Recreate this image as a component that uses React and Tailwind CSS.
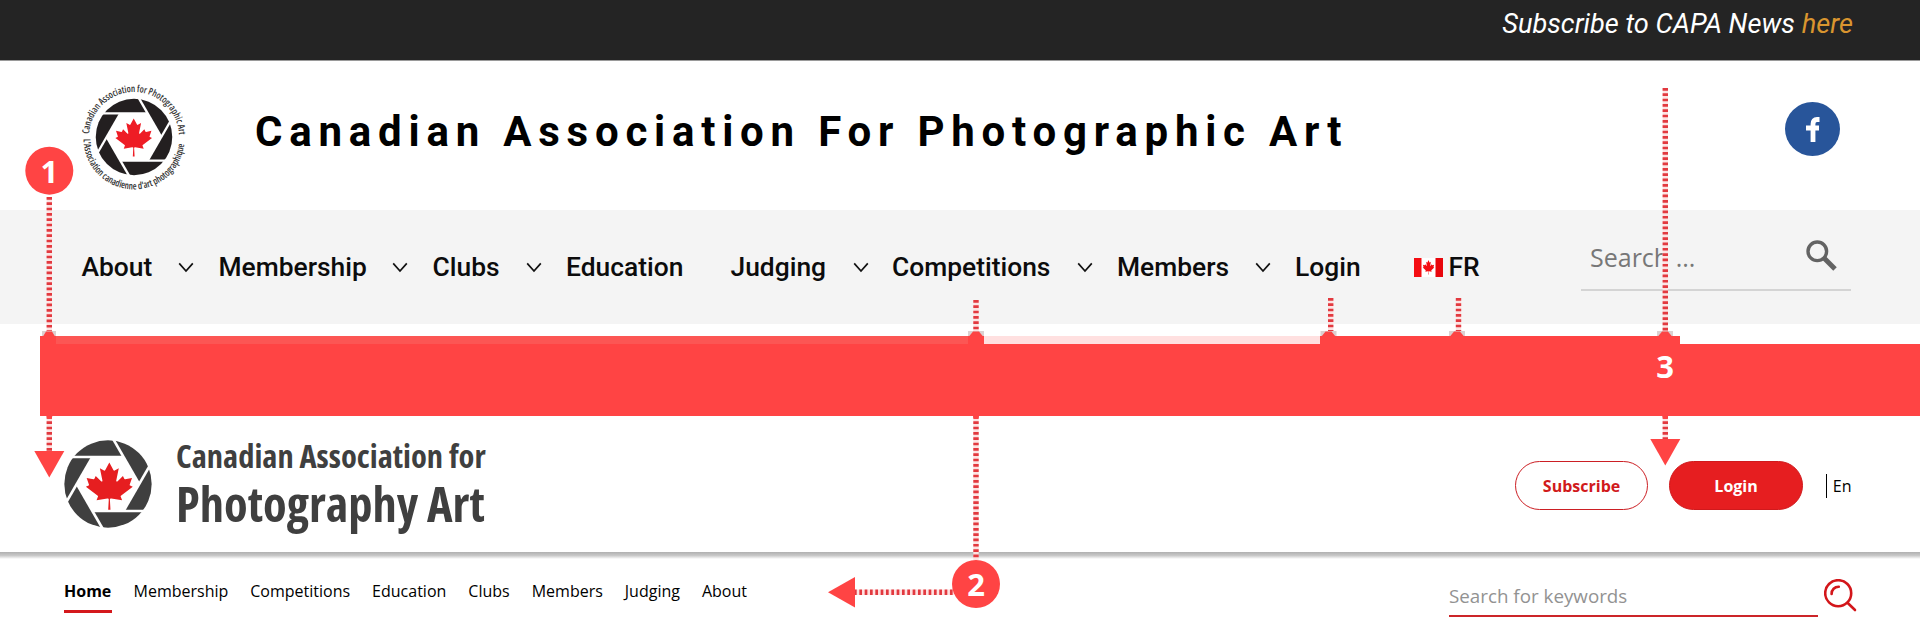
const LEAF =
  'm-90 2030 45-863a95 95 0 0 0-111-98l-859 151 116-320a65 65 0 0 0-20-73l-941-762 212-99a65 65 0 0 0 34-79l-186-572 542 115a65 65 0 0 0 73-38l105-247 423 454a65 65 0 0 0 111-57l-204-1052 327 189a65 65 0 0 0 91-27l332-652 332 652a65 65 0 0 0 91 27l327-189-204 1052a65 65 0 0 0 111 57l423-454 105 247a65 65 0 0 0 73 38l542-115-186 572a65 65 0 0 0 34 79l212 99-941 762a65 65 0 0 0-20 73l116 320-859-151a95 95 0 0 0-111 98l45 863z';

const BLADES = [0, 60, 120, 180, 240, 300];

/* Camera shutter, drawn on a disc of radius 131 round the origin */
function Shutter({ color, leaf, leafTransform }) {
  return (
    <>
      <circle r="131" fill={color} />
      <polygon points="47,-81 94,0 47,81 -47,81 -94,0 -47,-81" fill="#fff" />
      {BLADES.map((a) => (
        <path key={a} d="M47 -81H-120" transform={`rotate(${a})`} stroke="#fff" strokeWidth="8" />
      ))}
      <path d={LEAF} transform={leafTransform} fill={leaf} />
    </>
  );
}

function OldLogo() {
  return (
    <svg className="block h-[114px] w-[114px]" viewBox="-57 -57 114 114">
      <defs>
        <path id="arc-top" d="M-44.9 -3A45 45 0 0 1 44.9 -3" />
        <path id="arc-bottom" d="M-50.4 2A50.4 50.4 0 0 0 50.4 2" />
      </defs>
      <g transform="scale(0.292)">
        <Shutter color="#231f20" leaf="#ee1c25" leafTransform="translate(-1 1) scale(.0337 .0322)" />
      </g>
      <g className='fill-[#333] font-["Open_Sans",sans-serif] text-[9.8px] font-semibold [font-stretch:75%]'>
        <text textLength="136" lengthAdjust="spacingAndGlyphs">
          <textPath href="#arc-top" textLength="136" lengthAdjust="spacingAndGlyphs">
            Canadian Association for Photographic Art
          </textPath>
        </text>
        <text textLength="153" lengthAdjust="spacingAndGlyphs">
          <textPath href="#arc-bottom" textLength="153" lengthAdjust="spacingAndGlyphs">
            L'Association canadienne d'art photographique
          </textPath>
        </text>
      </g>
    </svg>
  );
}

function NewLogo() {
  return (
    <svg className="block h-[88px] w-[88px]" viewBox="-132 -132 264 264">
      <Shutter color="#3f3f3f" leaf="#e61e20" leafTransform="translate(4 6) scale(.0378 .0352)" />
    </svg>
  );
}

function Chevron() {
  return (
    <svg className="block h-4 w-4" viewBox="0 0 16 16" fill="none" stroke="#111" strokeWidth="1.7">
      <path d="M1.2 4.4 8 12 14.8 4.4" />
    </svg>
  );
}

function Flag() {
  return (
    <svg className="block h-[19px] w-[29px]" viewBox="0 0 29 19">
      <rect width="29" height="19" fill="#fff" />
      <rect width="7.5" height="19" fill="#f40d12" />
      <rect x="21.5" width="7.5" height="19" fill="#e8060c" />
      <path d={LEAF} transform="translate(14.5 9.3) scale(.0031 .0036)" fill="#f40d12" />
    </svg>
  );
}

const topItems = [
  { label: 'About', slot: 'w-[96px]', chevron: true, gap: 'w-[41px]' },
  { label: 'Membership', slot: 'w-[173.5px]', chevron: true, gap: 'w-[40.5px]' },
  { label: 'Clubs', slot: 'w-[93.5px]', chevron: true, gap: 'w-[40px]' },
  { label: 'Education', slot: 'w-[164.5px]' },
  { label: 'Judging', slot: 'w-[122px]', chevron: true, gap: 'w-[39.5px]' },
  { label: 'Competitions', slot: 'w-[185px]', chevron: true, gap: 'w-[40px]' },
  { label: 'Members', slot: 'w-[138px]', chevron: true, gap: 'w-[40px]' },
  { label: 'Login', slot: 'w-[118.5px]' },
];

const bottomItems = ['Membership', 'Competitions', 'Education', 'Clubs', 'Members', 'Judging', 'About'];

function Dots({ x, y1, y2 }) {
  return (
    <>
      <path d={`M${x} ${y1}V${y2}`} stroke="#fde3e3" strokeWidth="5.4" />
      <path d={`M${x} ${y1}V${y2}`} stroke="#e2393f" strokeWidth="5.4" strokeDasharray="2.7 2.63" />
    </>
  );
}

function Joint({ x, w }) {
  return (
    <>
      <rect x={x - w / 2} y="331" width={w} height="5" fill="#dcd0d0" />
      <path d={`M${x - w / 2 + 1} 336.5 L${x - 3} 331.5H${x + 3}L${x + w / 2 - 1} 336.5z`} fill="#fd4444" />
    </>
  );
}

function Annotations() {
  return (
    <svg className="pointer-events-none absolute inset-0 h-[639px] w-[1920px]" viewBox="0 0 1920 639">
      <Dots x={49.3} y1={197} y2={332} />
      <Dots x={49.3} y1={416} y2={452} />
      <Dots x={976} y1={300} y2={332} />
      <Dots x={976} y1={416} y2={560} />
      <Dots x={1330.7} y1={298} y2={332} />
      <Dots x={1458.5} y1={298} y2={332} />
      <Dots x={1665.3} y1={88} y2={332} />
      <Dots x={1665.3} y1={416} y2={439} />
      <path d="M854 592.3H954" stroke="#fde3e3" strokeWidth="5.4" />
      <path d="M854 592.3H954" stroke="#e2393f" strokeWidth="5.4" strokeDasharray="2.7 2.63" />
      <Joint x={49} w={14} />
      <Joint x={976} w={16} />
      <Joint x={1328.5} w={16} />
      <Joint x={1457} w={16} />
      <Joint x={1665} w={16} />
      <path d="M46.5 415.5h6l-1 3.5h-4zM973 415.5h6l-1 3.5h-4zM1662.3 415.5h6l-1 3.5h-4z" fill="#fd4444" />
      <path d="M34.3 451H64.3L49.3 477.5z" fill="#ff4444" />
      <path d="M1650.3 439H1680.3L1665.3 465.5z" fill="#ff4444" />
      <path d="M855 577V607.5L828 592.3z" fill="#ff4444" />
      <circle cx="49.3" cy="170.7" r="24" fill="#ff4444" />
      <circle cx="976" cy="584" r="24" fill="#ff4444" />
      <g className='fill-white font-["Open_Sans",sans-serif] text-[31px] font-bold' textAnchor="middle">
        <text x="49.3" y="182.5">1</text>
        <text x="976" y="596">2</text>
        <text x="1665" y="378">3</text>
      </g>
    </svg>
  );
}

export default function App() {
  return (
    <div className='relative h-[639px] w-[1920px] overflow-hidden bg-white font-["Open_Sans",sans-serif] text-black'>
      <div className='flex h-[61px] items-start justify-end gap-[7px] border-b border-[#9a9a9a] bg-[#242424] pr-[67px] font-["Roboto",sans-serif] text-[27.2px] leading-[48px] text-white italic'>
        <span>Subscribe to CAPA News</span>
        <span className="text-[#d9952f]">here</span>
      </div>

      <header className="flex h-[149px] items-start">
        <div className="ml-[77px] pt-[19px]">
          <OldLogo />
        </div>
        <h1 className='mt-[46px] ml-[64px] font-["Roboto",sans-serif] text-[42px] leading-[50px] font-bold tracking-[6.78px] whitespace-nowrap'>
          Canadian Association For Photographic Art
        </h1>
        <div className="mt-[41px] mr-[80px] ml-auto flex h-[54px] w-[55px] items-center justify-center rounded-[50%] bg-[#28559a]">
          <svg className="block h-[25px] w-[14px]" viewBox="0 0 14 25" fill="none" stroke="#fff" strokeWidth="4.8">
            <path d="M13.5 2.5H11Q7 2.5 7 7V25M0 11H13" />
          </svg>
        </div>
      </header>

      <nav className="flex h-[114px] items-center bg-[#f4f4f4] pl-[81.5px]">
        <div className='flex items-center font-["Roboto",sans-serif] text-[26.4px] leading-[40px] font-medium text-[#0c0c0c]'>
          {topItems.map((it) => (
            <div key={it.label} className="flex items-center">
              <span className={it.slot}>{it.label}</span>
              {it.chevron && (
                <span className={it.gap}>
                  <Chevron />
                </span>
              )}
            </div>
          ))}
          <Flag />
          <span className="ml-[6px] w-[132.5px]">FR</span>
        </div>
        <div className="mb-[18px] flex h-[65px] w-[270px] items-start justify-between border-b-2 border-[#d4d4d4] pt-[14px] pr-[13px] pl-[9px]">
          <span className="text-[25px] leading-[35px] text-[#777]">Search ...</span>
          <svg className="block h-[32px] w-[32px]" viewBox="0 0 32 32" fill="none" stroke="#636363">
            <circle cx="11.3" cy="11.3" r="9.3" strokeWidth="3.4" />
            <path d="M18 18 29 29" strokeWidth="5" />
          </svg>
        </div>
      </nav>

      <div className="flex h-[92px] items-end pl-[40px]">
        <div className="h-[80px] w-[16px] bg-[#ff4444]" />
        <div className="h-[80px] w-[912px] border-t-8 border-[#fc5654] bg-[#ff4444]" />
        <div className="h-[80px] w-[16px] bg-[#ff4444]" />
        <div className="h-[80px] w-[336px] border-t-8 border-[#ffe0e0] bg-[#ff4444]" />
        <div className="h-[80px] w-[360px] bg-[#ff4444]" />
        <div className="h-[72px] flex-1 bg-[#ff4444]" />
      </div>

      <section className="flex h-[136px] items-start pl-[64px]">
        <div className="pt-[24px]">
          <NewLogo />
        </div>
        <div className="ml-[24px] pt-[20px] font-bold whitespace-nowrap text-[#3f3f3f] [font-stretch:75%]">
          <div className="text-[32.5px] leading-[40px]">Canadian Association for</div>
          <div className="mt-[3px] text-[48.5px] leading-[48px]">Photography Art</div>
        </div>
        <div className="mt-[45px] ml-auto flex items-center pr-[68.5px] text-[16px]">
          <button className="h-[49px] w-[133.5px] rounded-full border-[1.5px] border-[#cc1f24] font-bold text-[#d11a1c]">
            Subscribe
          </button>
          <button className="ml-[21px] h-[49px] w-[133.5px] rounded-full border border-[#d01a1d] bg-[#e61e20] font-bold text-white">
            Login
          </button>
          <span className="ml-[23px] h-6 w-[1.5px] bg-black" />
          <span className="ml-[5.5px]">En</span>
        </div>
      </section>

      <div className="h-[7px] bg-linear-to-b from-[#b0b0b0] via-[#c8c8c8] to-white" />

      <div className="flex items-start pl-[64px]">
        <div className="flex gap-[22px] pt-[20px] text-[16px] leading-[24px]">
          <span className="h-[34px] w-[47.5px] border-b-[3px] border-[#d4181c] font-bold">Home</span>
          {bottomItems.map((t) => (
            <span key={t}>{t}</span>
          ))}
        </div>
        <div className="mr-[62px] ml-auto flex">
          <div className="mt-[20px] h-[38px] w-[369px] border-b-2 border-[#cc2529] text-[18.8px] leading-[35px] text-[#929292]">
            Search for keywords
          </div>
          <svg className="mt-[20px] ml-[6px] block h-[34px] w-[34px]" viewBox="0 0 34 34" fill="none" stroke="#d3161a" strokeWidth="2.6">
            <circle cx="14.2" cy="14.2" r="13" />
            <path d="M23.5 23.8 31 31M7.6 15A7 7 0 0 1 14.8 7.7" strokeLinecap="round" />
          </svg>
        </div>
      </div>

      <Annotations />
    </div>
  );
}
